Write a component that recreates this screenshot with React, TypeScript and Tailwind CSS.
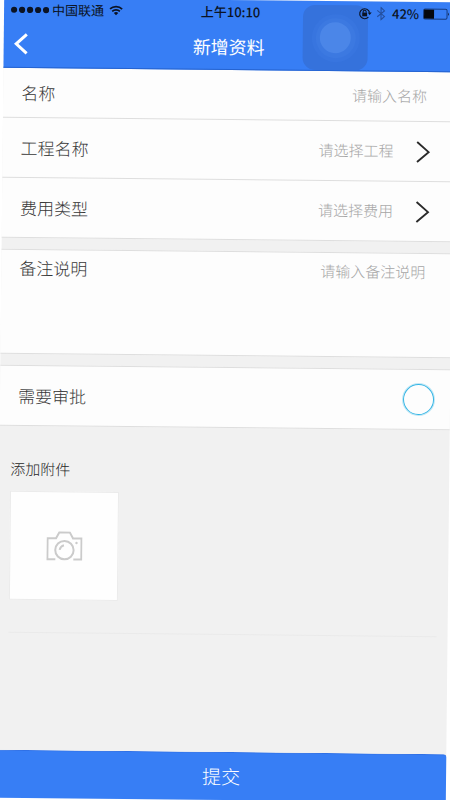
import type { ReactNode } from "react";

function StatusBar() {
  return (
    <div className="grid h-[23px] grid-cols-[1fr_auto_1fr] items-center pl-[7px] pr-1 text-[13px] leading-[22px] text-[#0b1324]">
      <div className="flex items-center gap-[3px]">
        <svg width="38" height="8" viewBox="0 0 38 8" fill="currentColor" aria-hidden="true">
          <circle cx="3" cy="4" r="3.1" />
          <circle cx="11" cy="4" r="3.1" />
          <circle cx="19" cy="4" r="3.1" />
          <circle cx="27" cy="4" r="3.1" />
          <circle cx="35" cy="4" r="3.1" />
        </svg>
        <span>中国联通</span>
        <svg className="ml-[2px]" width="14" height="11" viewBox="0 0 15 11" fill="none" stroke="currentColor" strokeWidth="1.8" aria-hidden="true">
          <path d="M1 4.1a9.3 9.3 0 0 1 13 0" />
          <path d="M3.4 6.6a5.9 5.9 0 0 1 8.2 0" />
          <path d="M7.5 10.8 5.1 8.4a3.4 3.4 0 0 1 4.8 0z" fill="currentColor" stroke="none" />
        </svg>
      </div>
      <span className="font-medium">上午10:10</span>
      <div className="flex items-center justify-end">
        <svg width="14" height="14" viewBox="0 0 14 14" fill="none" stroke="currentColor" aria-hidden="true">
          <path d="M10.4 10.6A5 5 0 1 1 11.5 6" strokeWidth="1.1" />
          <path d="M9.6 6h4l-2 2.6z" fill="currentColor" stroke="none" />
          <rect x="4.2" y="6.2" width="4.8" height="3.6" fill="currentColor" stroke="none" />
          <path d="M5.1 6.4V5.2a1.5 1.5 0 0 1 3 0v1.2" strokeWidth="1" />
        </svg>
        <svg className="ml-1" width="10" height="14" viewBox="0 0 10 14" fill="none" stroke="#244f9f" strokeWidth="1.1" aria-hidden="true">
          <path d="m1.2 3.8 7.2 6L5 13V1l3.4 3.2-7.2 6" />
        </svg>
        <span className="ml-[6px] font-medium">42%</span>
        <svg className="ml-1" width="27" height="12" viewBox="0 0 27 12" aria-hidden="true">
          <rect x="0.5" y="1" width="23.5" height="10" rx="1.5" fill="none" stroke="#173a7c" />
          <rect x="1" y="1.5" width="10" height="9" fill="#05070d" />
          <path d="M25 4.2q1.8 1.8 0 3.6z" fill="#0b1324" />
        </svg>
      </div>
    </div>
  );
}

function AssistiveTouch() {
  return (
    <div className="absolute right-[86px] top-1 flex size-[65px] items-center justify-center rounded-xl bg-[#3572dc]" aria-hidden="true">
      <div className="flex size-12 items-center justify-center rounded-full bg-[#3875df]">
        <div className="flex size-10 items-center justify-center rounded-full bg-[#3c79e1]">
          <div className="size-[31px] rounded-full bg-[#4b86e8]" />
        </div>
      </div>
    </div>
  );
}

function Chevron() {
  return (
    <svg className="ml-[22px] shrink-0" width="15" height="22" viewBox="0 0 15 22" fill="none" stroke="#2b2b2b" strokeWidth="1.9" aria-hidden="true">
      <path d="M1.5 1 13 11 1.5 21" />
    </svg>
  );
}

function SelectRow({ id, label, placeholder }: { id: string; label: string; placeholder: string }) {
  return (
    <div className="flex h-[60px] items-center border-b border-[#dedede] pl-[18px] pr-[22px]">
      <label htmlFor={id} className="shrink-0 text-[17px] text-[#383838]">{label}</label>
      <select
        id={id}
        defaultValue=""
        className="min-w-0 flex-1 appearance-none bg-transparent text-[15px] text-[#a6a6a6] outline-none [text-align-last:right]"
      >
        <option value="">{placeholder}</option>
      </select>
      <Chevron />
    </div>
  );
}

function Panel({ children }: { children: ReactNode }) {
  return <section className="border-t border-[#dedede] bg-[#fdfdfd]">{children}</section>;
}

export default function App() {
  return (
    <div className="h-screen overflow-hidden bg-white font-['Noto_Sans_CJK_SC','Noto_Sans',sans-serif]">
      <div className="flex min-h-full rotate-[0.6deg] flex-col bg-[#f1f1f1] font-light">
        <header className="relative border-b border-[#2563d0] bg-[#377ef5] font-normal">
          <AssistiveTouch />
          <div className="relative">
            <StatusBar />
            <div className="grid h-[46px] grid-cols-[1fr_auto_1fr] items-center px-[10px]">
              <button type="button" aria-label="返回" className="w-4">
                <svg width="15" height="22" viewBox="0 0 15 22" fill="none" stroke="white" strokeWidth="3" aria-hidden="true">
                  <path d="M13 1.5 2.5 11 13 20.5" />
                </svg>
              </button>
              <h1 className="text-[18px] text-white">新增资料</h1>
            </div>
          </div>
        </header>

        <form className="flex flex-1 flex-col" onSubmit={(e) => e.preventDefault()}>
          <div className="flex flex-col gap-[11px]">
            <section className="bg-[#fdfdfd]">
              <div className="flex h-[50px] items-center border-b border-[#dedede] pl-[18px] pr-[26px]">
                <label htmlFor="name" className="shrink-0 text-[17px] text-[#383838]">名称</label>
                <input
                  id="name"
                  placeholder="请输入名称"
                  className="min-w-0 flex-1 bg-transparent text-right text-[15px] outline-none placeholder:text-[#a6a6a6]"
                />
              </div>
              <SelectRow id="project" label="工程名称" placeholder="请选择工程" />
              <SelectRow id="fee" label="费用类型" placeholder="请选择费用" />
            </section>
            <Panel>
              <div className="flex h-[104px] items-start border-b border-[#dedede] pl-[18px] pr-[26px] pt-[6px]">
                <label htmlFor="note" className="shrink-0 text-[17px] leading-6 text-[#383838]">备注说明</label>
                <textarea
                  id="note"
                  placeholder="请输入备注说明"
                  className="h-full min-w-0 flex-1 resize-none bg-transparent text-right text-[15px] leading-6 outline-none placeholder:text-[#a6a6a6]"
                />
              </div>
            </Panel>
            <Panel>
              <div className="flex h-[60px] items-center justify-between border-b border-[#dedede] pl-[18px] pr-4">
                <label htmlFor="approval" className="text-[17px] text-[#383838]">需要审批</label>
                <input
                  id="approval"
                  type="checkbox"
                  className="size-[31px] appearance-none rounded-full border border-[#35b5e5] outline outline-[#35b5e5]/30 checked:bg-[#35b5e5]"
                />
              </div>
            </Panel>
          </div>

          <section className="mx-[11px] border-b border-[#eaeaea] pb-8 pt-[31px]">
            <h2 className="text-[15px] font-light leading-6 text-[#282828]">添加附件</h2>
            <button
              type="button"
              aria-label="添加附件"
              className="mt-[10px] flex size-[109px] items-center justify-center border border-[#ebebeb] bg-[#fefefe]"
            >
              <svg width="36" height="30" viewBox="0 0 36 30" fill="none" stroke="#cbcbcb" strokeWidth="2" aria-hidden="true">
                <path d="M9 28H1V7h8.5l3.3-6h10.4l3.3 6H35v21h-8" />
                <circle cx="18" cy="18.8" r="9.2" />
                <path d="M13.2 18.6q.8-3.6 4.3-4.6" />
                <circle cx="30" cy="11.5" r="1.2" fill="#cbcbcb" stroke="none" />
              </svg>
            </button>
          </section>

          <button
            type="submit"
            className="mt-auto h-12 w-full rounded-tr-[3px] border-t border-[#2f70e6] bg-[#377ef5] text-[19px] text-white"
          >
            提交
          </button>
        </form>
      </div>
    </div>
  );
}
